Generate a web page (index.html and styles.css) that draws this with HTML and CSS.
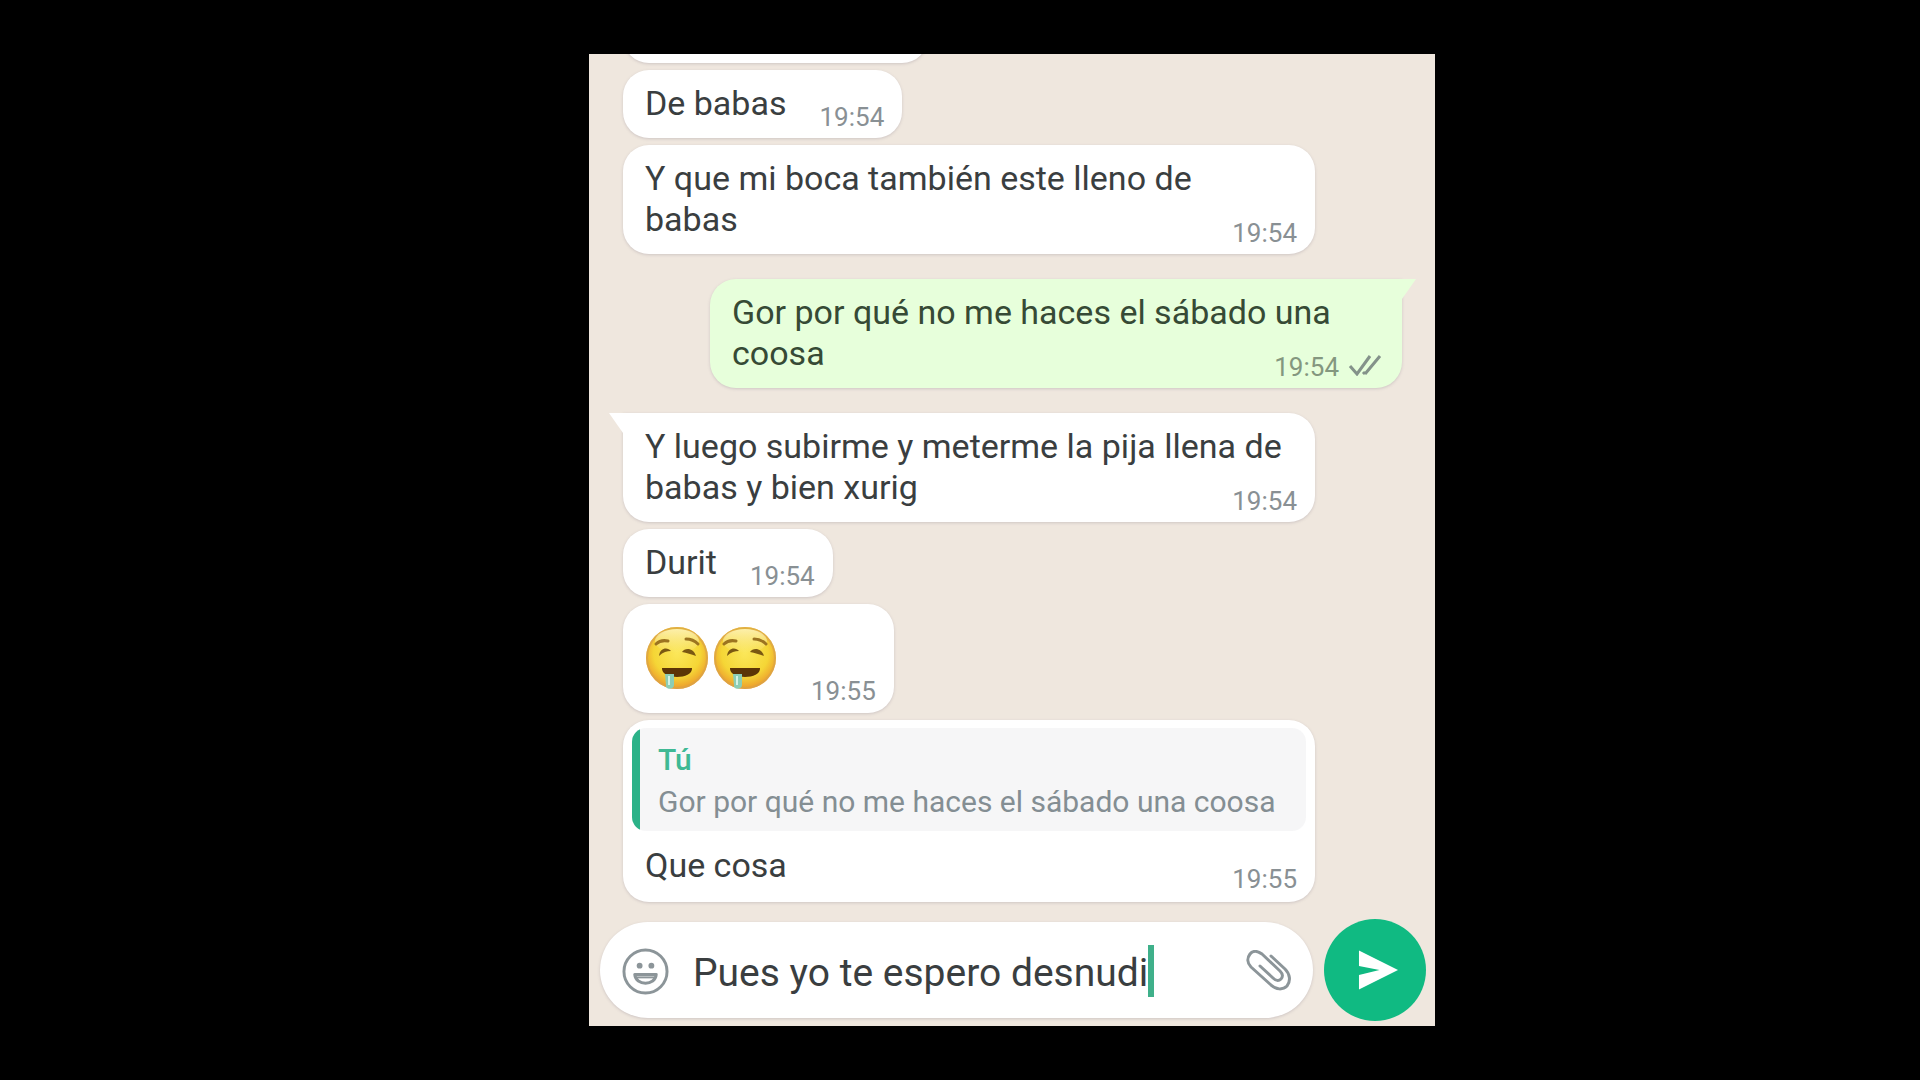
FILE: index.html
```html
<!DOCTYPE html>
<html lang="es">
<head>
    <meta charset="UTF-8">
    <meta name="viewport" content="width=device-width, initial-scale=1.0">
    <title>Chat</title>
    <link rel="stylesheet" href="styles.css">
</head>
<body>
    <!-- Shared emoji drawing -->
    <svg class="defs" width="0" height="0" aria-hidden="true">
        <defs>
            <radialGradient id="face" cx="50%" cy="42%" r="58%">
                <stop offset="0" stop-color="#fbe75a"/>
                <stop offset="0.65" stop-color="#f5d636"/>
                <stop offset="1" stop-color="#ec9a2c"/>
            </radialGradient>
            <linearGradient id="shine" x1="0" y1="0" x2="0" y2="1">
                <stop offset="0" stop-color="#fff6c8" stop-opacity="0.8"/>
                <stop offset="1" stop-color="#fff6c8" stop-opacity="0"/>
            </linearGradient>
            <symbol id="drool" viewBox="0 0 64 64">
                <circle cx="32" cy="32" r="31" fill="url(#face)"/>
                <circle cx="32" cy="32" r="30" fill="none" stroke="#d9a349" stroke-width="2" opacity="0.7"/>
                <ellipse cx="32" cy="15" rx="22" ry="12" fill="url(#shine)"/>
                <path d="M11 18c3-3 7-4 12-3M41 13c5 0 9 2 12 5" fill="none" stroke="#9c7420" stroke-width="3" stroke-linecap="round"/>
                <path d="M14 30c1-9 9-9 12-5-4 0-8 1-12 5zM37 26c3-5 12-4 14 4-5-2-9-3-14-4z" fill="#7a5812"/>
                <path d="M17 42h30c1 12-31 12-30 0z" fill="#5c3406"/>
                <path d="M20 48h9v11c0 5-9 5-8 0z" fill="#8ccdb4"/>
                <path d="M24 50v9" stroke="#d3f3e4" stroke-width="2"/>
            </symbol>
        </defs>
    </svg>

    <main class="chat">
        <section class="messages">
            <div class="bubble received cut"></div>

            <div class="bubble received">De babas<time class="time">19:54</time></div>

            <div class="bubble received long">Y que mi boca también este lleno de<br>babas<time class="time">19:54</time></div>

            <div class="bubble sent long tail">Gor por qué no me haces el sábado una<br>coosa<span class="time"><time>19:54</time><svg class="ticks" viewBox="0 0 34 22" aria-label="Entregado">
                    <path d="M2 12l7 8L22 2M17 20L32 2M15 18l2 2"/>
                </svg></span></div>

            <div class="bubble received long tail">Y luego subirme y meterme la pija llena de<br>babas y bien xurig<time class="time">19:54</time></div>

            <div class="bubble received">Durit<time class="time">19:54</time></div>

            <div class="bubble received emoji">
                <svg class="face" role="img" aria-label="🤤"><use href="#drool"/></svg>
                <svg class="face" role="img" aria-label="🤤"><use href="#drool"/></svg>
                <time class="time">19:55</time>
            </div>

            <div class="bubble received long reply">
                <blockquote class="quote">
                    <strong>Tú</strong>
                    <p>Gor por qué no me haces el sábado una coosa</p>
                </blockquote>
                <p class="reply-text">Que cosa<time class="time">19:55</time></p>
            </div>
        </section>

        <form class="composer">
            <div class="field">
                <button type="button" class="icon-btn" aria-label="Emojis">
                    <svg class="smiley" viewBox="0 0 48 48">
                        <circle cx="24" cy="24" r="22" fill="none" stroke="#8c9599" stroke-width="3"/>
                        <circle cx="18" cy="18" r="3" fill="#8c9599"/>
                        <circle cx="30" cy="18" r="3" fill="#8c9599"/>
                        <path d="M13 27h22c-1 12-21 12-22 0z" fill="none" stroke="#8c9599" stroke-width="3" stroke-linejoin="round"/>
                        <path d="M14 30h20" stroke="#8c9599" stroke-width="2"/>
                    </svg>
                </button>
                <input type="text" class="text" aria-label="Mensaje" value="Pues yo te espero desnudi">
                <span class="caret"></span>
                <button type="button" class="icon-btn attach" aria-label="Adjuntar">
                    <svg class="clip" viewBox="0 0 46 42">
                        <path d="M25 6l14 13c5 5 6 12 2 17-4 4-11 4-16-1L5 17C1 13 1 8 4 4s8-3 12 0l18 17c3 3 3 6 1 8s-5 2-8-1L14 16" fill="none" stroke="#8c9599" stroke-width="3" stroke-linecap="round" stroke-linejoin="round"/>
                    </svg>
                </button>
            </div>
            <button type="submit" class="send" aria-label="Enviar">
                <svg viewBox="0 0 42 40">
                    <path d="M1 0l40 20L1 40V25l21-5L1 16z" fill="#fff"/>
                </svg>
            </button>
        </form>
    </main>
</body>
</html>
```

FILE: styles.css
```css
* {
    margin: 0;
    padding: 0;
    box-sizing: border-box;
}

body {
    display: flex;
    justify-content: center;
    align-items: center;
    min-height: 100vh;
    padding-left: 104px;
    background: #000;
    font-family: Roboto, "Liberation Sans", sans-serif;
}

.defs {
    position: absolute;
}

.chat {
    display: flex;
    flex-direction: column;
    width: 100%;
    max-width: 846px;
    height: 90vh;
    background: #efe7de;
    overflow: hidden;
}

/* Messages */
.messages {
    flex: 1;
    display: flex;
    flex-direction: column;
    justify-content: flex-end;
    align-items: flex-start;
    gap: 7px;
    min-height: 0;
    padding: 0 33px 17px 34px;
}

.bubble {
    position: relative;
    flex-shrink: 0;
    max-width: 692px;
    padding: 13px 18px 14px 22px;
    border-radius: 26px;
    background: #fff;
    box-shadow: 0 1px 3px rgba(110, 100, 120, 0.25);
    color: #3a3e40;
    font-size: 34px;
    line-height: 41px;
}

.long {
    width: 100%;
}

.cut {
    width: 305px;
    height: 68px;
}

.sent {
    align-self: flex-end;
    margin: 18px 0;
    background: #e7ffdb;
    color: #364a35;
}

.tail::before {
    content: "";
    position: absolute;
    top: 0;
    width: 14px;
    height: 20px;
    background: inherit;
}

.sent.tail {
    border-top-right-radius: 0;
}

.sent.tail::before {
    left: 100%;
    clip-path: polygon(0 0, 100% 0, 0 100%);
}

.received.tail {
    border-top-left-radius: 0;
}

.received.tail::before {
    right: 100%;
    clip-path: polygon(0 0, 100% 0, 100% 100%);
}

.time {
    float: right;
    margin: 19px 0 -8px 33px;
    color: #899094;
    font-size: 26px;
    line-height: 30px;
}

.sent .time {
    margin-right: 2px;
    color: #84977f;
}

.ticks {
    width: 34px;
    height: 22px;
    margin-left: 9px;
    fill: none;
    stroke: #84928a;
    stroke-width: 3;
}

.emoji {
    display: flex;
    gap: 4px;
    height: 109px;
}

.face {
    width: 64px;
    height: 66px;
    margin-top: 8px;
}

.emoji .time {
    align-self: flex-end;
    margin: 0 0 -7px 30px;
}

/* Quoted reply */
.reply {
    padding: 8px 9px 16px;
}

.quote {
    padding: 11px 14px 8px 26px;
    margin-bottom: 14px;
    border-radius: 14px;
    background: linear-gradient(to right, #2bb288 8px, #f6f6f7 8px);
    color: #848e93;
    font-size: 30px;
    line-height: 42px;
}

.quote strong {
    display: block;
    color: #3fb994;
    font-weight: 500;
}

.reply-text {
    padding: 0 9px 0 13px;
}

/* Composer */
.composer {
    display: flex;
    align-items: center;
    gap: 11px;
    padding: 0 9px 5px 11px;
}

.field {
    flex: 1;
    display: flex;
    align-items: center;
    min-width: 0;
    height: 96px;
    padding: 2px 21px 0 22px;
    border-radius: 48px;
    background: #fff;
    box-shadow: 0 1px 3px rgba(110, 100, 120, 0.25);
}

.icon-btn {
    display: flex;
    border: none;
    background: none;
    cursor: pointer;
}

.smiley {
    width: 47px;
    height: 47px;
}

.text {
    field-sizing: content;
    min-width: 0;
    margin-left: 24px;
    padding-top: 3px;
    border: none;
    outline: none;
    background: none;
    color: #3a3e40;
    font-family: inherit;
    font-size: 39px;
    line-height: 50px;
}

.caret {
    width: 6px;
    height: 52px;
    background: #3fb08a;
}

.attach {
    margin-left: auto;
}

.clip {
    width: 46px;
    height: 42px;
}

.send {
    display: flex;
    justify-content: center;
    align-items: center;
    width: 102px;
    height: 102px;
    padding-left: 6px;
    border: none;
    border-radius: 50%;
    background: #10ba82;
    cursor: pointer;
}

.send svg {
    width: 41px;
    height: 40px;
}
```
